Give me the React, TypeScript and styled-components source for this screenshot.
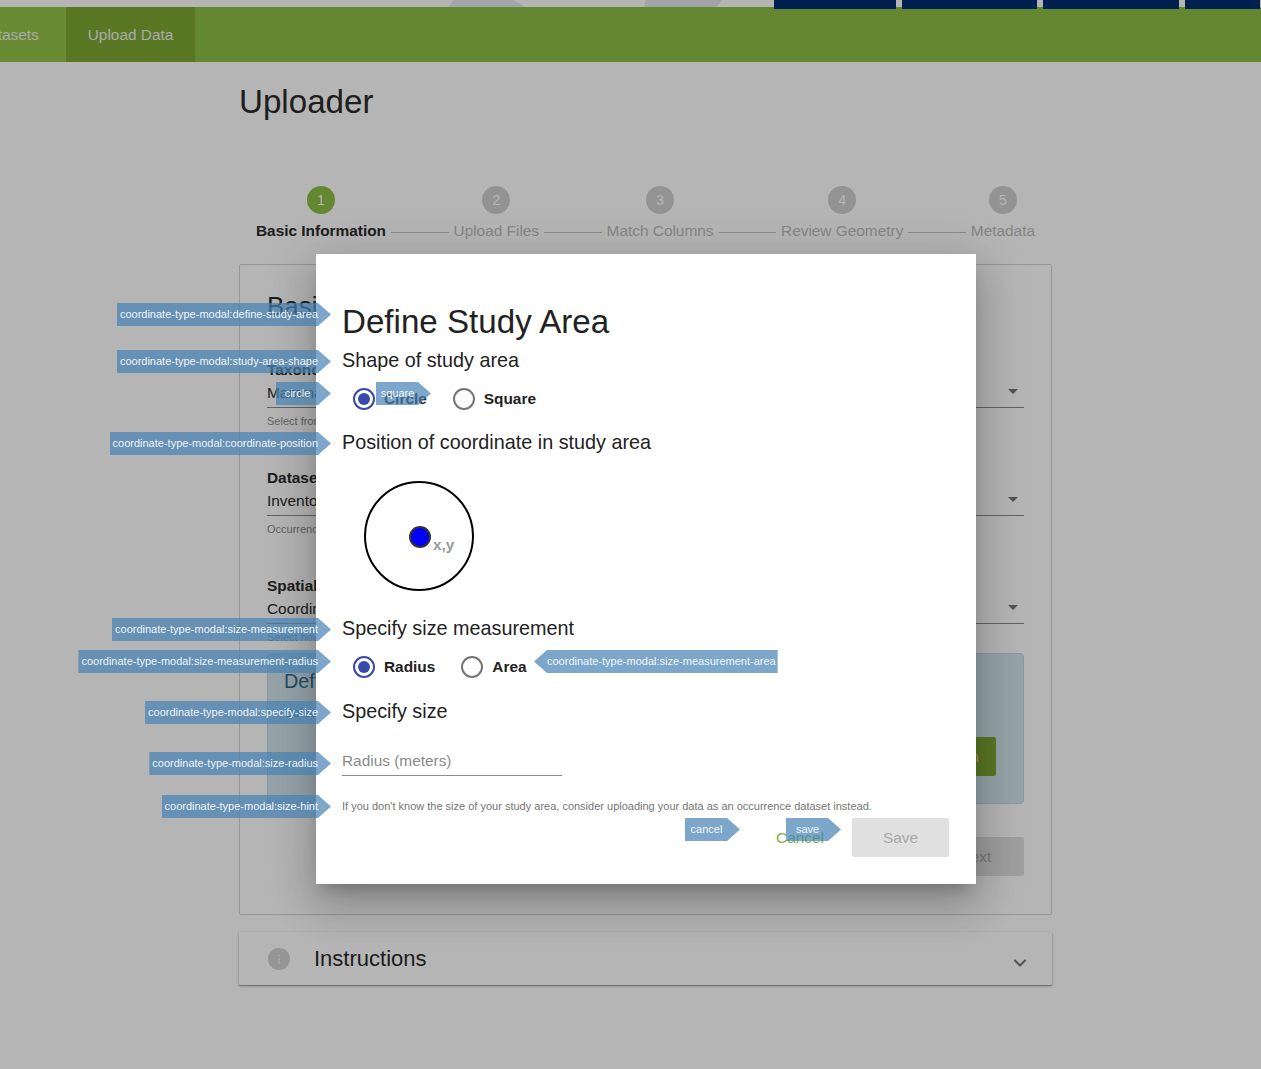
import React from "react";
import styled, { createGlobalStyle } from "styled-components";
import { ChevronDown } from "lucide-react";

const Global = createGlobalStyle`
  html, body { margin: 0; padding: 0; background: #fff; }
  body { font-family: "Liberation Sans", Arial, sans-serif; color: #222; }
`;

const Page = styled.div`
  position: relative;
  width: 1261px;
  height: 1069px;
  overflow: hidden;
  background: #fff;
`;

const Stripe = styled.svg`
  display: block;
  width: 1261px;
  height: 7px;
`;

const Nav = styled.nav`
  display: flex;
  height: 55px;
  background: #8dbe45;
`;

const Tab = styled.div<{ $active?: boolean; $clipped?: boolean }>`
  display: flex;
  align-items: center;
  padding: ${(p) => (p.$clipped ? "0 27px 0 22px" : "0 22px")};
  margin-left: ${(p) => (p.$clipped ? "-44px" : "0")};
  font-size: 15.4px;
  color: #eee;
  background: ${(p) => (p.$active ? "#7fa934" : p.$clipped ? "#94c44a" : "transparent")};
`;

const Content = styled.main`
  width: 813px;
  margin-left: 239px;
`;

const Title = styled.h1`
  margin: 20px 0 0;
  font-size: 33.15px;
  line-height: 39px;
  font-weight: 400;
  color: #2b2b2b;
`;

const Stepper = styled.div`
  display: flex;
  margin: 65px 0 0 17px;
  width: 779px;
`;

const Step = styled.div<{ $active?: boolean }>`
  display: flex;
  flex-direction: column;
  align-items: center;
  gap: 8px;
  font-size: 15.4px;
  line-height: 18px;
  font-weight: ${(p) => (p.$active ? 700 : 400)};
  color: ${(p) => (p.$active ? "#2b2b2b" : "#bcbcbc")};
`;

const Bullet = styled.span<{ $active?: boolean }>`
  display: flex;
  align-items: center;
  justify-content: center;
  width: 28px;
  height: 28px;
  border-radius: 50%;
  font-size: 14px;
  font-weight: 400;
  color: #fff;
  background: ${(p) => (p.$active ? "#8dbe45" : "#d0d0d0")};
`;

const Connector = styled.span`
  flex: 1;
  height: 1px;
  margin: 46px 5px 0;
  background: #c4c4c4;
`;

const Card = styled.section`
  box-sizing: border-box;
  height: 651px;
  margin-top: 24px;
  padding: 26px 27px 0;
  border: 1px solid #d4d4d4;
  border-radius: 2px;
`;

const CardTitle = styled.h2`
  margin: 0;
  font-size: 26px;
  line-height: 30px;
  font-weight: 400;
  color: #2b2b2b;
`;

const Field = styled.div<{ $top: number }>`
  margin-top: ${(p) => p.$top}px;
`;

const FieldLabel = styled.div`
  font-size: 15.4px;
  line-height: 18px;
  font-weight: 700;
  color: #2b2b2b;
`;

const Select = styled.div`
  display: flex;
  align-items: center;
  justify-content: space-between;
  box-sizing: border-box;
  height: 29px;
  padding: 0 6px 0 0;
  font-size: 15.4px;
  color: #2b2b2b;
  border-bottom: 1px solid #8c8c8c;
`;

const Caret = styled.span`
  width: 0;
  height: 0;
  margin-top: -4px;
  border-left: 5px solid transparent;
  border-right: 5px solid transparent;
  border-top: 5px solid #757575;
`;

const FieldHint = styled.div`
  margin-top: 7px;
  font-size: 11px;
  line-height: 13px;
  color: #8a8a8a;
`;

const BlueBox = styled.div`
  display: flex;
  flex-direction: column;
  box-sizing: border-box;
  height: 151px;
  margin-top: 9px;
  padding: 15px 27px 0 16px;
  border: 1px solid #b8dce8;
  border-radius: 4px;
  background: #d3e8f0;
  color: #31708f;
`;

const BlueTitle = styled.div`
  font-size: 19.8px;
  line-height: 24px;
`;

const BlueText = styled.div`
  margin-top: 12px;
  font-size: 13px;
`;

const GreenButton = styled.div`
  align-self: flex-end;
  display: flex;
  align-items: center;
  justify-content: flex-end;
  box-sizing: border-box;
  width: 140px;
  height: 39px;
  margin-top: 17px;
  padding-right: 17px;
  border-radius: 2px;
  background: #7fa934;
  color: #e8c96a;
  font-size: 15.4px;
`;

const NextRow = styled.div`
  display: flex;
  justify-content: flex-end;
  margin-top: 33px;
`;

const NextButton = styled.div`
  display: flex;
  align-items: center;
  justify-content: center;
  width: 97px;
  height: 39px;
  border-radius: 2px;
  background: #e0e0e0;
  color: #aaa;
  font-size: 15.4px;
`;

const Accordion = styled.section`
  display: flex;
  align-items: center;
  box-sizing: border-box;
  height: 53px;
  margin-top: 17px;
  padding: 0 22px 0 29px;
  background: #fff;
  box-shadow: 0 1px 3px rgba(0, 0, 0, 0.3), 0 1px 1px rgba(0, 0, 0, 0.22);
  border-radius: 1px;
`;

const AccordionTitle = styled.span`
  flex: 1;
  margin-left: 24px;
  font-size: 22px;
  color: #2b2b2b;
`;

const InfoIcon = styled.svg`
  display: block;
  width: 22px;
  height: 22px;
`;

const Chevron = styled.span`
  display: flex;
  margin-top: 8px;
  color: #757575;
`;

const Backdrop = styled.div`
  position: absolute;
  inset: 0;
  background: rgba(0, 0, 0, 0.29);
`;

const TopMenu = styled.div`
  position: absolute;
  top: 0;
  left: 774px;
  display: flex;
  gap: 6px;
`;

const TopItem = styled.span<{ $w: number }>`
  display: block;
  width: ${(p) => p.$w}px;
  height: 9px;
  background: #00214f;
`;

const Modal = styled.div`
  position: absolute;
  left: 316px;
  top: 254px;
  box-sizing: border-box;
  width: 660px;
  height: 630px;
  padding: 48px 27px 0 26px;
  background: #fff;
  box-shadow: 0 11px 15px -7px rgba(0, 0, 0, 0.2), 0 24px 38px 3px rgba(0, 0, 0, 0.14), 0 9px 46px 8px rgba(0, 0, 0, 0.12);
`;

const ModalTitle = styled.h2`
  margin: 0;
  font-size: 33.15px;
  line-height: 40px;
  font-weight: 400;
  color: #222;
`;

const Heading = styled.h3<{ $top: number }>`
  margin: ${(p) => p.$top}px 0 0;
  font-size: 19.8px;
  line-height: 24px;
  font-weight: 400;
  color: #222;
`;

const RadioRow = styled.div`
  display: flex;
  gap: 26px;
  margin: 16px 0 0 11px;
`;

const RadioItem = styled.label`
  display: flex;
  align-items: center;
  gap: 9px;
  font-size: 15.4px;
  line-height: 22px;
  font-weight: 700;
  color: #222;
`;

const RadioOuter = styled.span<{ $on?: boolean }>`
  display: flex;
  align-items: center;
  justify-content: center;
  box-sizing: border-box;
  width: 22px;
  height: 22px;
  border-radius: 50%;
  border: 2px solid ${(p) => (p.$on ? "#3949ab" : "#757575")};
`;

const RadioDot = styled.span`
  width: 12px;
  height: 12px;
  border-radius: 50%;
  background: #3949ab;
`;

const Diagram = styled.svg`
  display: block;
  width: 140px;
  height: 116px;
  margin: 26px 0 0 20px;
`;

const InputBox = styled.div`
  box-sizing: border-box;
  width: 220px;
  height: 27px;
  margin-top: 26px;
  padding-top: 3px;
  font-size: 15.4px;
  line-height: 18px;
  color: #8a8a8a;
  border-bottom: 1px solid #8c8c8c;
`;

const SizeHint = styled.p`
  margin: 23px 0 0;
  font-size: 11px;
  line-height: 14px;
  color: #757575;
`;

const Actions = styled.div`
  display: flex;
  justify-content: flex-end;
  align-items: center;
  gap: 28px;
  margin-top: 5px;
`;

const CancelButton = styled.span`
  font-size: 15.4px;
  color: #7cb342;
`;

const SaveButton = styled.span`
  display: flex;
  align-items: center;
  justify-content: center;
  width: 97px;
  height: 39px;
  border-radius: 2px;
  background: #e0e0e0;
  color: #a8a8a8;
  font-size: 15.4px;
`;

const Tag = styled.div<{ $top: number; $x: number; $side: "left" | "right"; $width?: number }>`
  position: absolute;
  top: ${(p) => p.$top}px;
  ${(p) => (p.$side === "right" ? `right: ${1261 - p.$x}px;` : `left: ${p.$x}px;`)}
  box-sizing: border-box;
  height: 23px;
  min-width: ${(p) => p.$width ?? 0}px;
  ${(p) =>
    p.$side === "left"
      ? "padding: 0 2px 0 13px;"
      : p.$width
        ? "padding: 0 15px 0 3px;"
        : "padding: 0 13px 0 3px;"}
  font-size: 11px;
  line-height: 23px;
  text-align: center;
  white-space: nowrap;
  color: rgba(255, 255, 255, 0.92);
  background: rgba(70, 130, 180, 0.7);
  clip-path: ${(p) =>
    p.$side === "right"
      ? "polygon(0 0, calc(100% - 13px) 0, 100% 50%, calc(100% - 13px) 100%, 0 100%)"
      : "polygon(13px 0, 100% 0, 100% 100%, 13px 100%, 0 50%)"};
`;

const steps = ["Basic Information", "Upload Files", "Match Columns", "Review Geometry", "Metadata"];

const tags: { top: number; x: number; side: "left" | "right"; width?: number; text: string }[] = [
  { top: 303, x: 331, side: "right", text: "coordinate-type-modal:define-study-area" },
  { top: 350, x: 331, side: "right", text: "coordinate-type-modal:study-area-shape" },
  { top: 382, x: 331, side: "right", width: 55, text: "circle" },
  { top: 382, x: 431, side: "right", width: 55, text: "square" },
  { top: 432, x: 331, side: "right", text: "coordinate-type-modal:coordinate-position" },
  { top: 618, x: 331, side: "right", text: "coordinate-type-modal:size-measurement" },
  { top: 650, x: 331, side: "right", text: "coordinate-type-modal:size-measurement-radius" },
  { top: 650, x: 534, side: "left", text: "coordinate-type-modal:size-measurement-area" },
  { top: 701, x: 331, side: "right", text: "coordinate-type-modal:specify-size" },
  { top: 752, x: 331, side: "right", text: "coordinate-type-modal:size-radius" },
  { top: 795, x: 331, side: "right", text: "coordinate-type-modal:size-hint" },
  { top: 818, x: 740, side: "right", width: 55, text: "cancel" },
  { top: 818, x: 841, side: "right", width: 55, text: "save" },
];

export default function App() {
  return (
    <Page>
      <Global />
      <Stripe viewBox="0 0 1261 7">
        <polygon points="449,7 453,0 514,0 525,7" fill="#e6e9f0" />
        <polygon points="644,7 646,0 722,0 717,7" fill="#e3e6ee" />
      </Stripe>
      <Nav>
        <Tab $clipped>Datasets</Tab>
        <Tab $active>Upload Data</Tab>
      </Nav>
      <Content>
        <Title>Uploader</Title>
        <Stepper>
          {steps.map((label, i) => (
            <React.Fragment key={label}>
              {i > 0 && <Connector />}
              <Step $active={i === 0}>
                <Bullet $active={i === 0}>{i + 1}</Bullet>
                {label}
              </Step>
            </React.Fragment>
          ))}
        </Stepper>
        <Card>
          <CardTitle>Basic Information</CardTitle>
          <Field $top={40}>
            <FieldLabel>Taxonomy</FieldLabel>
            <Select>Mammalia<Caret /></Select>
            <FieldHint>Select from available taxonomies</FieldHint>
          </Field>
          <Field $top={41}>
            <FieldLabel>Dataset Type</FieldLabel>
            <Select>Inventory<Caret /></Select>
            <FieldHint>Occurrence or inventory</FieldHint>
          </Field>
          <Field $top={41}>
            <FieldLabel>Spatial</FieldLabel>
            <Select>Coordinates<Caret /></Select>
            <FieldHint>Select how</FieldHint>
          </Field>
          <BlueBox>
            <BlueTitle>Define</BlueTitle>
            <BlueText>Select</BlueText>
            <GreenButton>n</GreenButton>
          </BlueBox>
          <NextRow>
            <NextButton>Next</NextButton>
          </NextRow>
        </Card>
        <Accordion>
          <InfoIcon viewBox="0 0 22 22">
            <circle cx="11" cy="11" r="11" fill="#d2d2d2" />
            <rect x="10.4" y="10" width="1.2" height="6" fill="#f4f4f4" />
            <rect x="10.4" y="7" width="1.2" height="1.4" fill="#f4f4f4" />
          </InfoIcon>
          <AccordionTitle>Instructions</AccordionTitle>
          <Chevron><ChevronDown size={20} strokeWidth={2.5} /></Chevron>
        </Accordion>
      </Content>
      <Backdrop />
      <TopMenu>
        <TopItem $w={122} />
        <TopItem $w={135} />
        <TopItem $w={136} />
        <TopItem $w={75} />
      </TopMenu>
      <Modal>
        <ModalTitle>Define Study Area</ModalTitle>
        <Heading $top={6}>Shape of study area</Heading>
        <RadioRow>
          <RadioItem><RadioOuter $on><RadioDot /></RadioOuter>Circle</RadioItem>
          <RadioItem><RadioOuter />Square</RadioItem>
        </RadioRow>
        <Heading $top={20}>Position of coordinate in study area</Heading>
        <Diagram viewBox="0 0 140 116">
          <circle cx="57" cy="56" r="54" fill="#fff" stroke="#000" strokeWidth="2" />
          <circle cx="58" cy="57" r="10" fill="#0000ff" stroke="#333" strokeWidth="2" />
          <text x="71" y="70" fontFamily="Liberation Sans, Arial, sans-serif" fontSize="15.4" fontWeight="700" fill="#999">x,y</text>
        </Diagram>
        <Heading $top={20}>Specify size measurement</Heading>
        <RadioRow>
          <RadioItem><RadioOuter $on><RadioDot /></RadioOuter>Radius</RadioItem>
          <RadioItem><RadioOuter />Area</RadioItem>
        </RadioRow>
        <Heading $top={21}>Specify size</Heading>
        <InputBox>Radius (meters)</InputBox>
        <SizeHint>If you don't know the size of your study area, consider uploading your data as an occurrence dataset instead.</SizeHint>
        <Actions>
          <CancelButton>Cancel</CancelButton>
          <SaveButton>Save</SaveButton>
        </Actions>
      </Modal>
      {tags.map((t) => (
        <Tag key={t.text} $top={t.top} $x={t.x} $side={t.side} $width={t.width}>{t.text}</Tag>
      ))}
    </Page>
  );
}
